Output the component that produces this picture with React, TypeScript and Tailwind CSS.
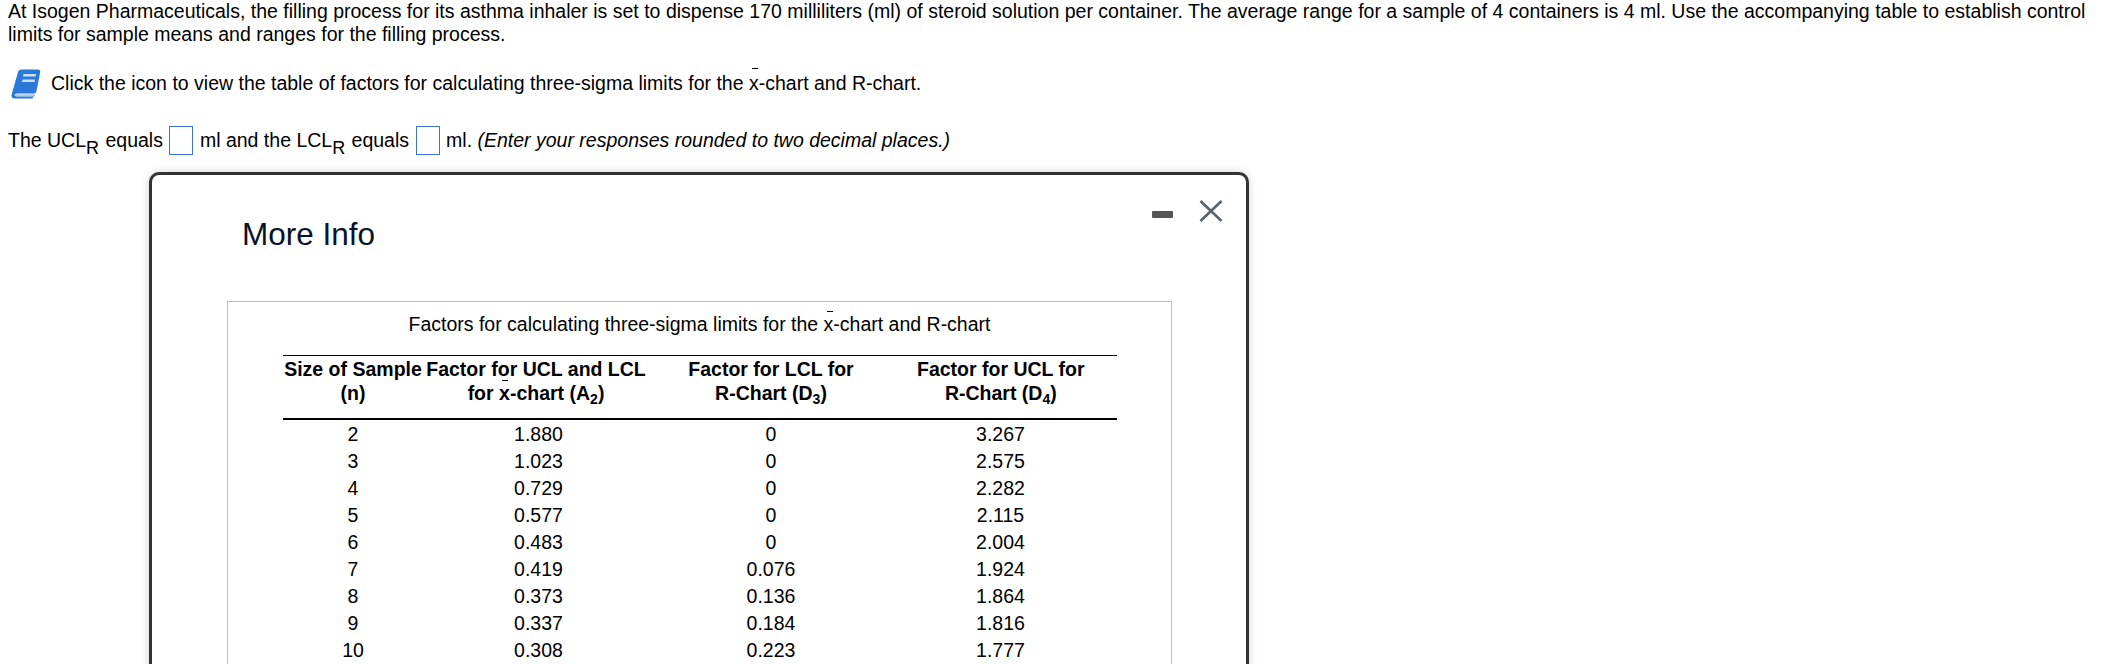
import React from "react";

const rows = [
  ["2", "1.880", "0", "3.267"],
  ["3", "1.023", "0", "2.575"],
  ["4", "0.729", "0", "2.282"],
  ["5", "0.577", "0", "2.115"],
  ["6", "0.483", "0", "2.004"],
  ["7", "0.419", "0.076", "1.924"],
  ["8", "0.373", "0.136", "1.864"],
  ["9", "0.337", "0.184", "1.816"],
  ["10", "0.308", "0.223", "1.777"],
];

const XBar = () => (
  <span className="relative inline-block">
    x
    <span className="absolute left-[3px] top-[-1px] h-[1px] w-[6px] bg-black" />
  </span>
);

const BookIcon = () => (
  <svg viewBox="0 0 30 30" className="h-[30px] w-[30px] shrink-0">
    <path
      d="M7 3 Q7.5 0.5 10 0.5 L27 0.5 Q29.5 0.5 29.2 3 L25.5 22 Q25 24.5 23 24.5 L6 24.5 Q4 24.5 3.6 26 Q3.6 27.2 5.5 27.2 L23 27.2 L22.5 28 Q21.8 29.5 20.5 29.5 L4 29.5 Q0.2 29.5 0.5 26 Z"
      fill="#2a79d9"
    />
    <path d="M4.5 25.2 L24.5 25.2 L23.6 27.4 L5 27.4 Q3.6 26.5 4.5 25.2 Z" fill="#a9c9f0" />
    <path d="M12.5 5 L25 5 L24.6 7.5 L12 7.5 Z" fill="#cfe0f6" />
    <path d="M11.5 10.5 L24 10.5 L23.6 13 L11 13 Z" fill="#cfe0f6" />
  </svg>
);

const InputBox = () => (
  <span className="mx-[6.5px] inline-block h-[29px] w-[24px] border-[1.5px] border-[#3d76c6] align-middle" />
);

const Sub = ({ children }: { children: React.ReactNode }) => (
  <span className="relative top-[7px] mr-[1px] text-[18px] leading-none">{children}</span>
);

const HeadSub = ({ children }: { children: React.ReactNode }) => (
  <span className="relative top-[4px] text-[14px] leading-none">{children}</span>
);

export default function App() {
  return (
    <div className="h-[664px] w-[2110px] overflow-hidden bg-white font-['Liberation_Sans',Arial,sans-serif] text-[19.5px] text-black">
      <p className="w-[2095px] pl-2 leading-[23px]">
        At Isogen Pharmaceuticals, the filling process for its asthma inhaler is set to dispense
        170 milliliters (ml) of steroid solution per container. The average range for a sample of
        4 containers is 4 ml. Use the accompanying table to establish control limits for sample
        means and ranges for the filling process.
      </p>

      {/* Icon line */}
      <div className="mt-[23px] flex items-center gap-[10px] pl-[11px]">
        <BookIcon />
        <span>
          Click the icon to view the table of factors for calculating three-sigma limits for the{" "}
          <XBar />
          -chart and R-chart.
        </span>
      </div>

      {/* Answer line */}
      <div className="mt-[27px] flex h-[29px] items-center pl-2">
        <span>
          The UCL<Sub>R</Sub> equals
        </span>
        <InputBox />
        <span>
          ml and the LCL<Sub>R</Sub> equals
        </span>
        <InputBox />
        <span>
          ml. <em>(Enter your responses rounded to two decimal places.)</em>
        </span>
      </div>

      {/* Modal */}
      <div className="relative ml-[149px] mt-[17px] w-[1100px] rounded-t-[10px] border-[3px] border-[#333333] bg-white pb-10 shadow-[0_0_8px_rgba(0,0,0,0.18)]">
        <div className="absolute left-[1000px] top-[36px] h-[7px] w-[21px] rounded-[1px] bg-[#555555]" />
        <svg viewBox="0 0 24 22" className="absolute left-[1047px] top-[25px] h-[22px] w-[24px]">
          <path d="M1.5 1 L22.5 21 M22.5 1 L1.5 21" stroke="#566370" strokeWidth="2.6" fill="none" />
        </svg>

        <h2 className="pl-[90px] pt-[39px] text-[31.5px] leading-[40px] text-[#0a1228]">More Info</h2>

        <div className="ml-[75px] mt-[47px] w-[945px] border border-[#bdbdbd] pt-[10px]">
          <div className="text-center leading-[24px]">
            Factors for calculating three-sigma limits for the <XBar />
            -chart and R-chart
          </div>

          <table className="ml-[55px] mt-[19px] w-[834px] table-fixed border-collapse">
            <colgroup>
              <col className="w-[140px]" />
              <col className="w-[226px]" />
              <col className="w-[244px]" />
              <col className="w-[224px]" />
            </colgroup>
            <thead>
              <tr className="font-bold">
                <th className="border-t border-b-2 border-black pb-[13px] pt-[1px] text-center font-bold leading-[24px]">
                  Size of Sample
                  <br />
                  (n)
                </th>
                <th className="border-t border-b-2 border-black pb-[13px] pt-[1px] text-center font-bold leading-[24px]">
                  Factor for UCL and LCL
                  <br />
                  for <XBar />
                  -chart (A<HeadSub>2</HeadSub>)
                </th>
                <th className="border-t border-b-2 border-black pb-[13px] pt-[1px] text-center font-bold leading-[24px]">
                  Factor for LCL for
                  <br />
                  R-Chart (D<HeadSub>3</HeadSub>)
                </th>
                <th className="border-t border-b-2 border-black pb-[13px] pl-2 pr-2 pt-[1px] text-left font-bold leading-[24px]">
                  <span className="inline-block pl-[16px] text-center">
                    Factor for UCL for
                    <br />
                    R-Chart (D<HeadSub>4</HeadSub>)
                  </span>
                </th>
              </tr>
            </thead>
            <tbody className="leading-[24px]">
              <tr className="h-[1px]" />
              {rows.map((row) => (
                <tr key={row[0]} className="h-[27.1px]">
                  <td className="text-center">{row[0]}</td>
                  <td className="pl-[5px] text-center">{row[1]}</td>
                  <td className="text-center">{row[2]}</td>
                  <td className="pr-[9px] text-center">{row[3]}</td>
                </tr>
              ))}
            </tbody>
          </table>
        </div>
      </div>
    </div>
  );
}
